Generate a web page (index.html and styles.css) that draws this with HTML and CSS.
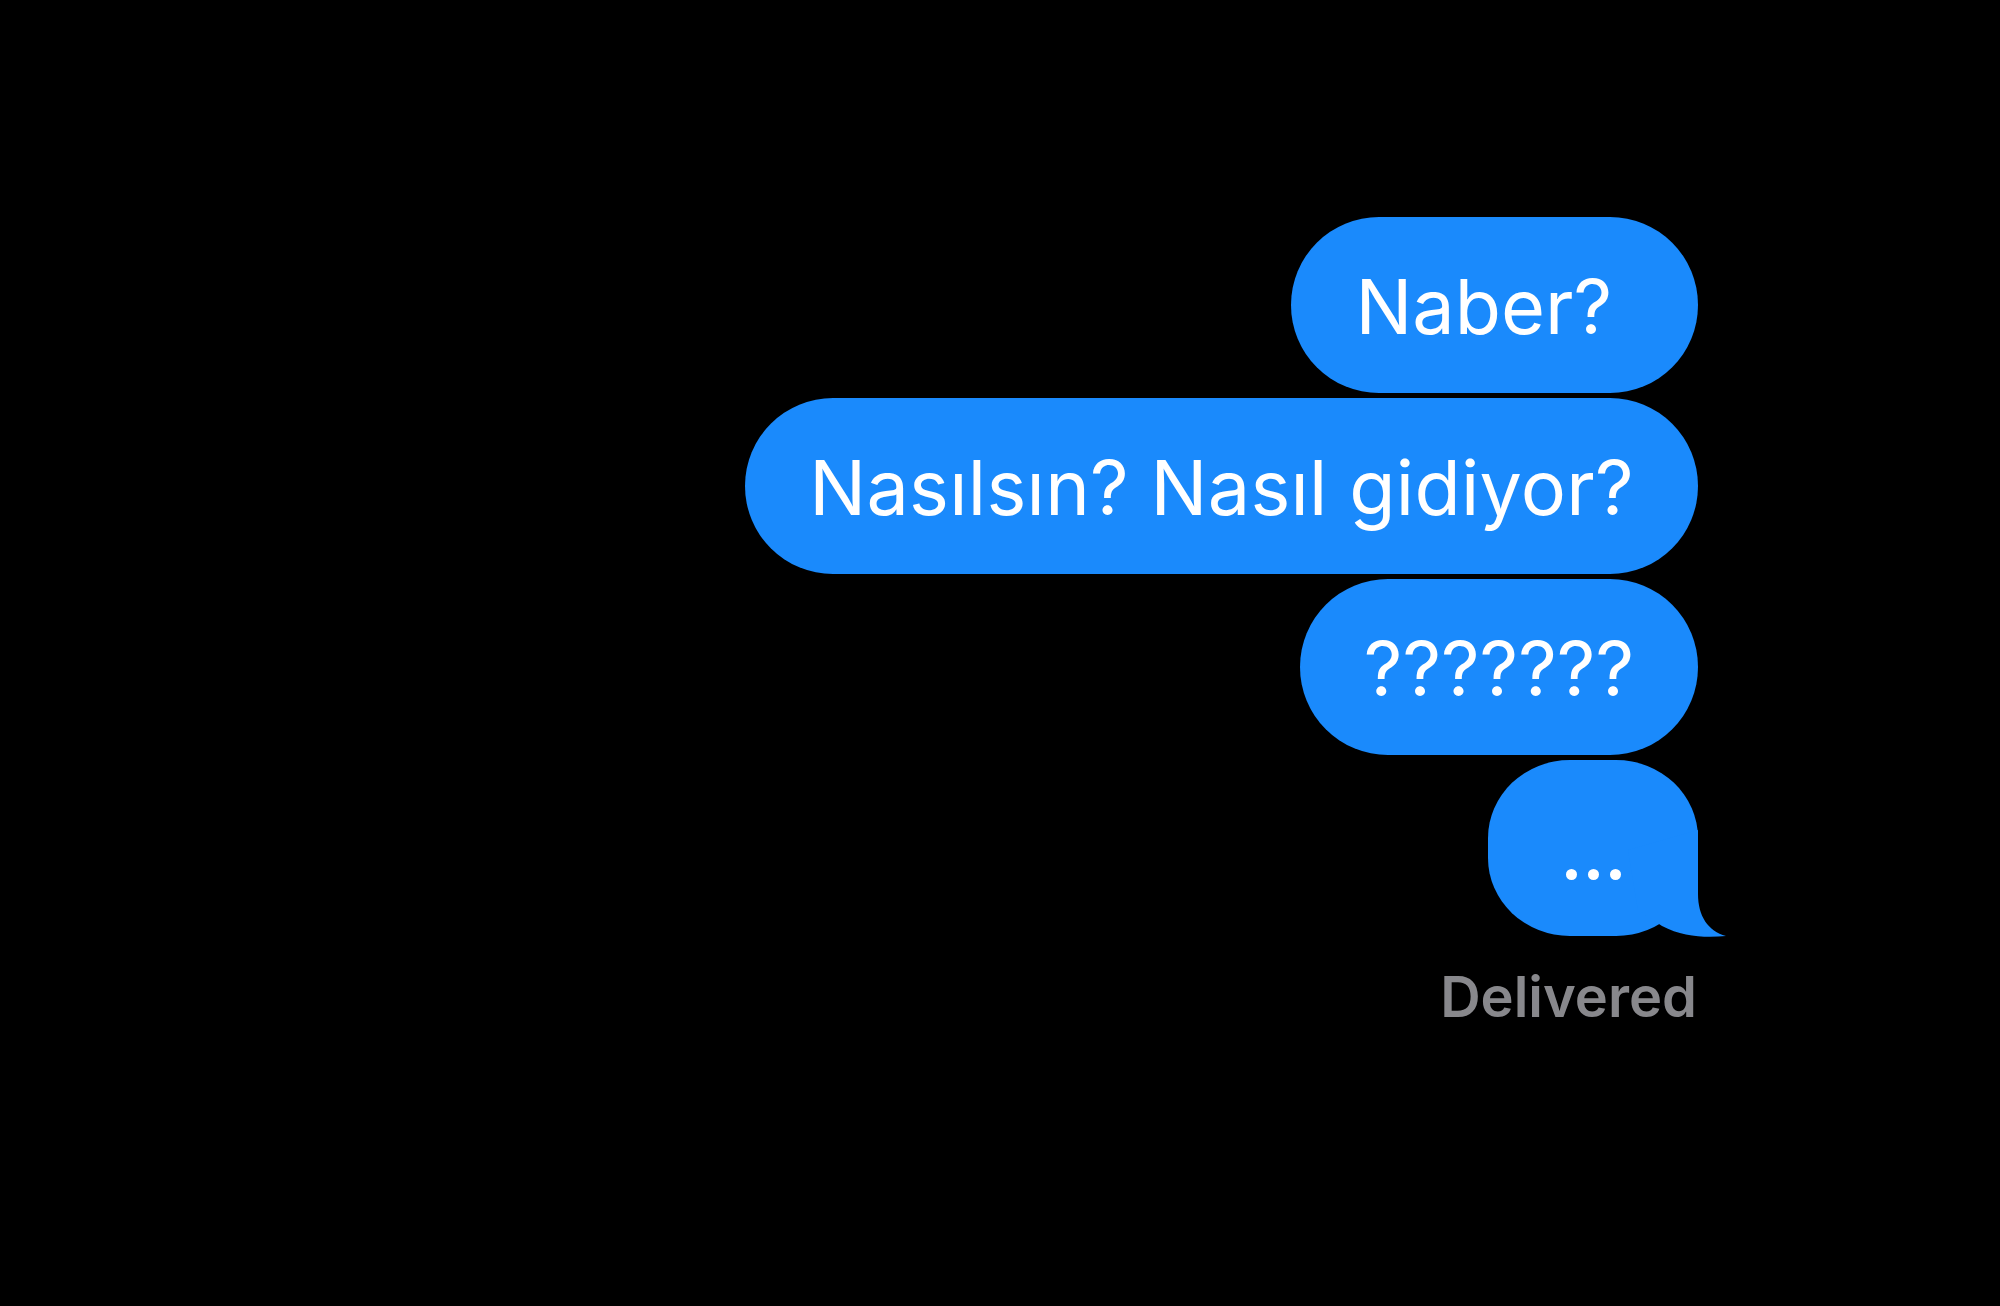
FILE: index.html
```html
<!DOCTYPE html>
<html lang="tr">
<head>
<meta charset="utf-8">
<title>Mesajlar</title>
<link rel="stylesheet" href="styles.css">
</head>
<body>
  <main class="thread">
    <div class="bubble bubble--roomy">Naber?</div>
    <div class="bubble bubble--airy">Nasılsın? Nasıl gidiyor?</div>
    <div class="bubble">???????</div>
    <div class="typing">
      <span class="typing__dot"></span>
      <span class="typing__dot"></span>
      <span class="typing__dot"></span>
      <svg class="typing__tail" width="240" height="180" viewBox="0 0 240 180" aria-hidden="true">
        <path d="M210 70 L210 134 C210 156 220 171 238 176 C218 178 195 177 174 166 L150 150 L140 90 Z"/>
      </svg>
    </div>
    <div class="status">Delivered</div>
  </main>
</body>
</html>
```

FILE: styles.css
```css
html, body {
  margin: 0;
  background: #000;
}

body {
  width: 2000px;
  height: 1306px;
  overflow: hidden;
}

.thread {
  display: flex;
  flex-direction: column;
  align-items: flex-end;
  gap: 5px;
  padding: 217px 302px 0 0;
}

.bubble {
  box-sizing: border-box;
  height: 176px;
  padding: 4px 64px 0 64px;
  border-radius: 88px;
  background: #1a8afc;
  color: #fff;
  font-family: Inter, "Liberation Sans", sans-serif;
  font-size: 75.5px;
  line-height: 172px;
  white-space: nowrap;
}

.bubble--roomy {
  padding-right: 86px;
}

.bubble--airy {
  letter-spacing: 0.3px;
}

.typing {
  position: relative;
  box-sizing: border-box;
  width: 210px;
  height: 176px;
  padding-top: 52px;
  border-radius: 82px / 78px;
  background: #1a8afc;
  display: flex;
  align-items: center;
  justify-content: center;
  gap: 11px;
}

.typing__dot {
  width: 11px;
  height: 11px;
  border-radius: 50%;
  background: #fff;
}

.typing__tail {
  position: absolute;
  left: 0;
  top: 0;
  fill: #1a8afc;
  overflow: visible;
}

.status {
  margin-top: 24px;
  padding-right: 1px;
  color: #88888c;
  font-family: Inter, "Liberation Sans", sans-serif;
  font-weight: 600;
  font-size: 56px;
  line-height: 64px;
}
```
